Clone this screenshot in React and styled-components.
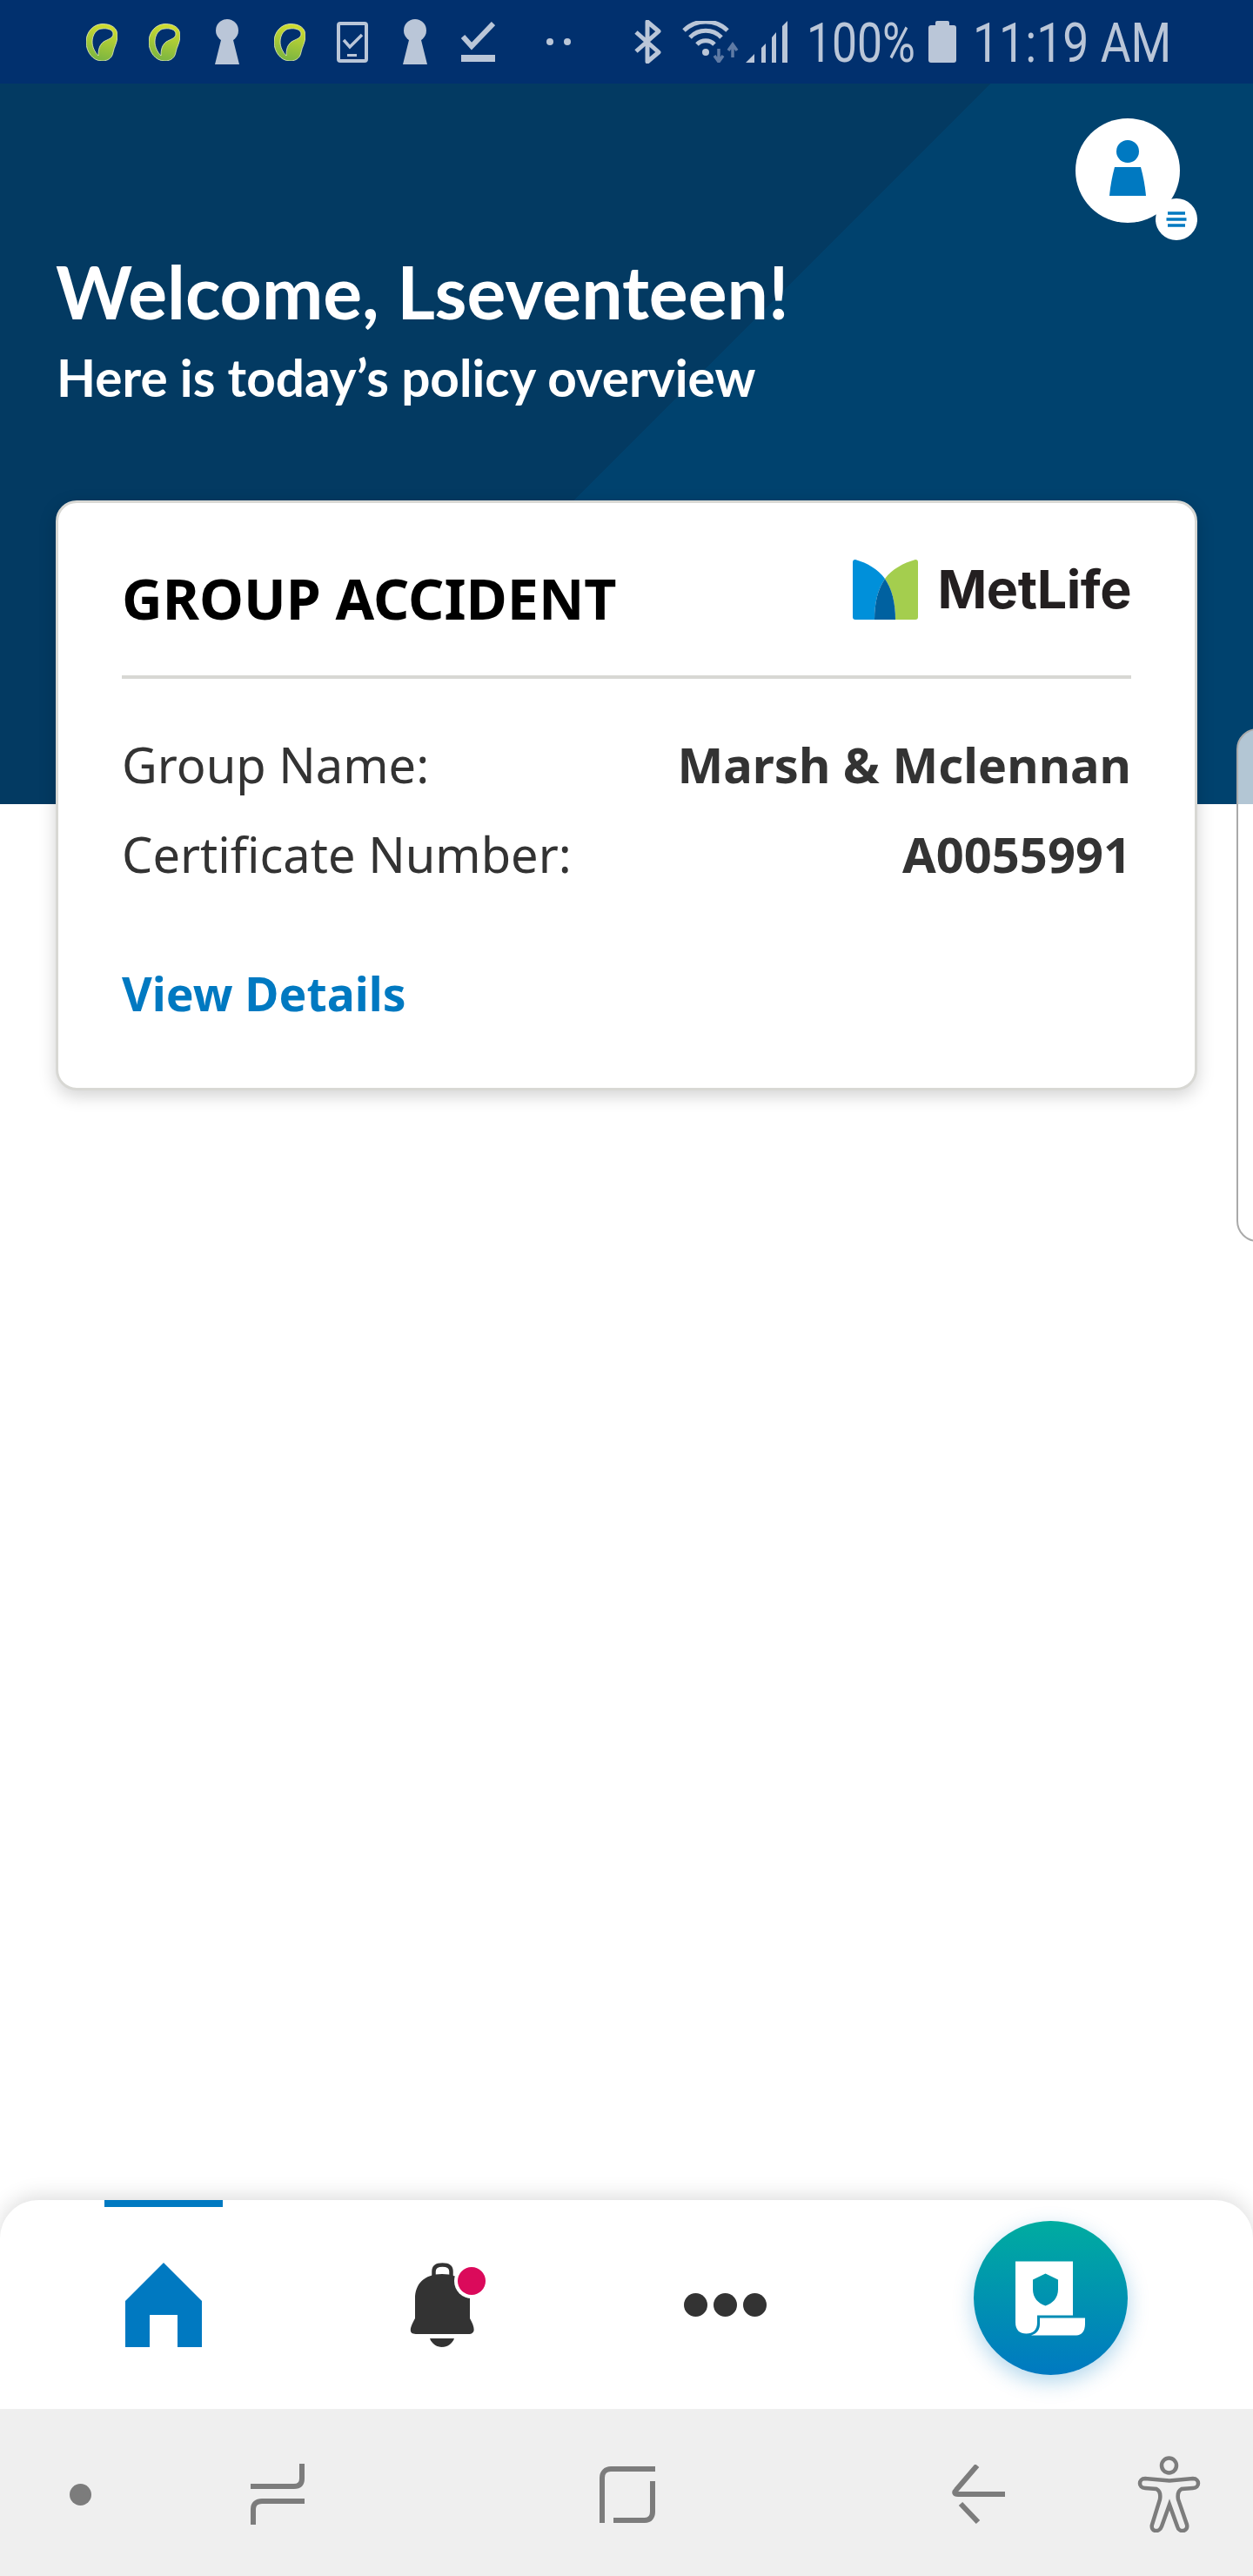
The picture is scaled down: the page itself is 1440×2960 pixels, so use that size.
import React from 'react';
import styled, { createGlobalStyle } from 'styled-components';

const GlobalStyle = createGlobalStyle`
	html, body {
		margin: 0;
		padding: 0;
		background: #fff;
	}
	* {
		box-sizing: border-box;
	}
`;

const STATUS = '#bac6d8';
const BRAND = '#0079c1';
const SOFTKEY = '#7c7c7c';

const App = () => (
	<Page>
		<GlobalStyle />
		<StatusBar>
			<StatusLeft>
				<Leaf $ml={0} />
				<Leaf $ml={36} />
				<Keyhole $ml={40} />
				<Leaf $ml={40} />
				<StatusIcon $ml={36} width='36' height='47' viewBox='387 24 36 47'>
					<rect x='389' y='26' width='32' height='43' rx='2' fill='none' stroke={STATUS} strokeWidth='4' />
					<polyline points='395,45 402,53 416,39' fill='none' stroke={STATUS} strokeWidth='3.5' />
					<rect x='399' y='61' width='11' height='3' fill={STATUS} />
				</StatusIcon>
				<Keyhole $ml={40} />
				<StatusIcon $ml={39} width='39' height='46' viewBox='530 25 39 46'>
					<polyline points='532,42 542,53 567,27' fill='none' stroke={STATUS} strokeWidth='6' />
					<rect x='530' y='63' width='39' height='8' fill={STATUS} />
				</StatusIcon>
				<StatusIcon $ml={59} width='28' height='8' viewBox='628 44 28 8'>
					<circle cx='632' cy='48' r='4' fill={STATUS} />
					<circle cx='652' cy='48' r='4' fill={STATUS} />
				</StatusIcon>
			</StatusLeft>
			<StatusRight>
				<StatusIcon $ml={0} width='31' height='50' viewBox='729 23 31 50'>
					<path d='M731 37 L757 60 L744 71 V25 L757 36 L731 59' fill='none' stroke={STATUS} strokeWidth='5' strokeLinejoin='round' />
				</StatusIcon>
				<StatusIcon $ml={24} width='65' height='48' viewBox='784 24 65 48'>
					<path d='M786 35 A36 36 0 0 1 836 35 M793 43 A25 25 0 0 1 829 43 M801 51 A14 14 0 0 1 821 51' fill='none' stroke={STATUS} strokeWidth='5' />
					<circle cx='811' cy='60' r='4' fill={STATUS} />
					<path d='M826 56 V68 M821 64 L826 71 L831 64 M842 66 V54 M837 58 L842 51 L847 58' fill='none' stroke='#5f7ba5' strokeWidth='3.5' />
				</StatusIcon>
				<StatusIcon $ml={8} width='48' height='48' viewBox='857 24 48 48'>
					<path d='M857 72 L867 62 V72 Z M875 72 V55 L880 50 V72 Z M887 72 V43 L892 37 V72 Z M899 72 V30 L905 24 V72 Z' fill={STATUS} />
				</StatusIcon>
				<StatusText $ml={22} $w={121} $sx={0.82}>100%</StatusText>
				<StatusIcon $ml={19} width='32' height='48' viewBox='1067 24 32 48'>
					<rect x='1075' y='24' width='16' height='8' rx='2' fill={STATUS} />
					<rect x='1067' y='29' width='32' height='43' rx='3' fill={STATUS} />
				</StatusIcon>
				<StatusText $ml={19} $w={222} $sx={0.85}>11:19 AM</StatusText>
			</StatusRight>
		</StatusBar>

		<Main>
			<Hero>
				<AvatarRow>
					<Avatar>
						<svg width='120' height='120' viewBox='1236 136 120 120'>
							<circle cx='1296' cy='174' r='13' fill={BRAND} />
							<path d='M1281 192 H1311 C1314 203 1316 214 1317 225 H1275 C1276 214 1278 203 1281 192 Z' fill={BRAND} />
						</svg>
						<MenuBadge>
							<svg width='24' height='18' viewBox='0 0 24 18'>
								<path d='M2 2 H22 M0.5 9 H23.5 M2 16 H22' fill='none' stroke={BRAND} strokeWidth='3.6' />
							</svg>
						</MenuBadge>
					</Avatar>
				</AvatarRow>
				<Welcome>Welcome, Lseventeen!</Welcome>
				<Subtitle>Here is today’s policy overview</Subtitle>
				<Carousel>
					<PolicyCard>
						<CardHead>
							<CardTitle>GROUP ACCIDENT</CardTitle>
							<Brand>
								<svg width='75' height='69' viewBox='980 643 75 69'>
									<path d='M983 643 C997 647 1009 654 1017 665 C1009 677 1005 692 1005 712 H983 Q980 712 980 709 V646 Q980 643 983 643 Z' fill='#0090da' />
									<path d='M1052 643 Q1055 643 1055 646 V709 Q1055 712 1052 712 H1029 C1029 692 1025 677 1017 665 C1025 654 1038 647 1052 643 Z' fill='#a4ce4e' />
									<path d='M1017 665 C1025 677 1029 692 1029 712 H1005 C1005 692 1009 677 1017 665 Z' fill='#0061a0' />
								</svg>
								<BrandName>MetLife</BrandName>
							</Brand>
						</CardHead>
						<InfoRow>
							<InfoLabel>Group Name:</InfoLabel>
							<InfoValue>Marsh &amp; Mclennan</InfoValue>
						</InfoRow>
						<InfoRow>
							<InfoLabel>Certificate Number:</InfoLabel>
							<InfoValue>A0055991</InfoValue>
						</InfoRow>
						<DetailsLink>View Details</DetailsLink>
					</PolicyCard>
					<NextCard />
				</Carousel>
			</Hero>
		</Main>

		<BottomNav>
			<NavItem $active>
				<svg width='136' height='97' viewBox='120 2599 136 97'>
					<path fillRule='evenodd' d='M188 2599 L232 2643 V2696 H204 V2659 H172 V2696 H144 V2643 Z' fill={BRAND} />
				</svg>
			</NavItem>
			<NavItem $ml={184}>
				<svg width='136' height='97' viewBox='440 2599 136 97'>
					<path d='M498.5 2614 V2609 C498.5 2604 502 2601.5 508.5 2601.5 C515 2601.5 518.5 2604 518.5 2609 V2614' fill='none' stroke='#333' strokeWidth='4.5' />
					<path d='M477 2663 V2640 C477 2624 487 2612 508 2612 C529 2612 540 2624 540 2640 V2663 C545 2672 548 2681 538 2681 H478 C468 2681 472 2672 477 2663 Z' fill='#333' />
					<path d='M494 2686 H522 C520 2692 514 2696 508 2696 C502 2696 496 2692 494 2686 Z' fill='#333' />
					<circle cx='542' cy='2620' r='20' fill='#fff' />
					<circle cx='542' cy='2620' r='16' fill='#db0a5b' />
				</svg>
			</NavItem>
			<NavItem $ml={189}>
				<MoreDots>
					<MoreDot />
					<MoreDot />
					<MoreDot />
				</MoreDots>
			</NavItem>
			<PolicyFab>
				<svg width='95' height='95' viewBox='1160 2592.5 95 95'>
					<path fillRule='evenodd' fill='#fff' d='M1167 2598 H1233 V2660 H1192 V2668 C1192 2677 1187 2681 1179.5 2681 C1172 2681 1167 2677 1167 2668 Z M1201.5 2612 L1187 2619 V2630 C1187 2640 1193 2646 1201.5 2649 C1210 2646 1216 2640 1216 2630 V2619 Z' />
					<path fill='#fff' d='M1195 2663 H1247 V2670 C1247 2678 1243 2683 1237 2683 H1185 C1192 2681 1195 2676 1195 2670 Z' />
				</svg>
			</PolicyFab>
		</BottomNav>

		<SoftKeys>
			<SoftDot />
			<SoftKey $ml={183} width='62' height='70' viewBox='288 2831 62 70'>
				<path d='M288 2857 H338 C344 2857 347 2854 347 2848 V2831 M350 2874 H301 C295 2874 291 2877 291 2883 V2901' />
			</SoftKey>
			<SoftKey $ml={339} width='64' height='65' viewBox='689 2833 64 65'>
				<path d='M753 2836 H702 C696 2836 692 2840 692 2846 V2898 M750 2850 V2885 C750 2891 747 2895 741 2895 H705' />
			</SoftKey>
			<SoftKey $ml={341} width='61' height='68' viewBox='1094 2832 61 68'>
				<path d='M1123 2833 L1099 2861 C1096 2864 1097 2866 1101 2866 H1155 M1104 2877 L1124 2898' />
			</SoftKey>
			<SoftKey $ml={152} width='73' height='88' viewBox='1307 2822 73 88' $thin>
				<circle cx='1343.5' cy='2833' r='8.5' />
				<path d='M1316 2848 L1344 2850.5 L1371 2848 C1379 2848 1379 2859 1371 2859 L1358 2860 C1354 2862 1353 2866 1354 2872 L1364 2901 C1366 2909 1355 2911 1353 2903 L1344 2878 L1335 2903 C1332 2911 1322 2909 1324 2901 L1333 2872 C1334 2866 1333 2862 1329 2860 L1316 2859 C1308 2859 1308 2848 1316 2848 Z' />
			</SoftKey>
		</SoftKeys>
	</Page>
);

const Leaf = ({ $ml }) => (
	<StatusIcon $ml={$ml} width='36' height='43' viewBox='0 0 36 43'>
		<defs>
			<linearGradient id='leafFill' x1='0.6' y1='0' x2='0.4' y2='1'>
				<stop offset='0' stopColor='#d2dd2e' />
				<stop offset='1' stopColor='#79b441' />
			</linearGradient>
		</defs>
		<path
			fillRule='evenodd'
			fill='url(#leafFill)'
			stroke='#e8efc0'
			strokeWidth='0.8'
			d='M19 0.5 C29 0.5 36 5 36 14 C36 22 32 27 31 33 C30 39 26 43 18 43 C8 43 0 33 0 21 C0 9 9 0.5 19 0.5 Z M18 6 C12 6 7 13 7 21 C7 27 10 33 14 37 C14 30 15 25 20 21 C25 18 31 17 31 12 C31 7 24 5 18 6 Z'
		/>
	</StatusIcon>
);

const Keyhole = ({ $ml }) => (
	<StatusIcon $ml={$ml} width='28' height='52' viewBox='0 0 28 52'>
		<circle cx='14' cy='13' r='13' fill={STATUS} />
		<path d='M8 20 H20 L28 52 H0 Z' fill={STATUS} />
	</StatusIcon>
);

const Page = styled.div`
	display: flex;
	flex-direction: column;
	width: 1440px;
	height: 2960px;
	overflow: hidden;
	background: #fff;
	font-family: 'Noto Sans', sans-serif;
`;

const StatusBar = styled.div`
	display: flex;
	align-items: center;
	justify-content: space-between;
	flex: none;
	height: 96px;
	padding: 0 100px 0 99px;
	background: #01306e;
`;

const StatusLeft = styled.div`
	display: flex;
	align-items: center;
`;

const StatusRight = styled.div`
	display: flex;
	align-items: center;
`;

const StatusIcon = styled.svg`
	display: block;
	flex: none;
	margin-left: ${(p) => p.$ml}px;
`;

const StatusText = styled.span`
	display: block;
	flex: none;
	width: ${(p) => p.$w}px;
	margin-left: ${(p) => p.$ml}px;
	padding-top: 3px;
	font-family: Roboto, sans-serif;
	font-size: 63px;
	font-weight: 400;
	line-height: 93px;
	color: ${STATUS};
	white-space: nowrap;
	transform: scaleX(${(p) => p.$sx});
	transform-origin: left center;
`;

const Main = styled.main`
	flex: 1;
	min-height: 0;
`;

const Hero = styled.section`
	height: 828px;
	padding-top: 40px;
	background: linear-gradient(135deg, #033a62 50.2%, #00426e 50.2%);
`;

const AvatarRow = styled.div`
	display: flex;
	justify-content: flex-end;
	padding-right: 84px;
`;

const Avatar = styled.div`
	position: relative;
	width: 120px;
	height: 120px;
	border-radius: 50%;
	background: #fff;
`;

const MenuBadge = styled.div`
	position: absolute;
	right: -20px;
	bottom: -20px;
	display: flex;
	align-items: center;
	justify-content: center;
	width: 48px;
	height: 48px;
	border-radius: 50%;
	background: #fff;
`;

const Welcome = styled.h1`
	margin: 31px 0 0 64px;
	font-family: Lato, sans-serif;
	font-size: 84px;
	font-weight: 700;
	line-height: 96px;
	color: #fff;
`;

const Subtitle = styled.p`
	margin: 14px 0 0 65px;
	font-family: Lato, sans-serif;
	font-size: 58.5px;
	font-weight: 700;
	line-height: 72px;
	color: #fff;
`;

const Carousel = styled.div`
	display: flex;
	gap: 45px;
	align-items: flex-start;
	margin-top: 106px;
	padding-left: 64px;
`;

const PolicyCard = styled.article`
	flex: none;
	width: 1312px;
	height: 678px;
	padding: 0 73px;
	border: 3px solid #d8d8d4;
	border-radius: 24px;
	background: #fff;
	box-shadow: 0 6px 20px rgba(0, 0, 0, 0.18);
`;

const NextCard = styled.div`
	flex: none;
	width: 300px;
	height: 590px;
	margin-top: 262px;
	border: 2px solid #aaa;
	border-radius: 24px;
	background: rgba(255, 255, 255, 0.7);
`;

const CardHead = styled.header`
	display: flex;
	justify-content: space-between;
	align-items: flex-start;
	height: 202px;
	padding-top: 65px;
	border-bottom: 4px solid #d8d8d4;
`;

const CardTitle = styled.h2`
	margin: -1px 0 0;
	font-size: 64.5px;
	font-weight: 700;
	line-height: 90px;
	color: #000;
`;

const Brand = styled.div`
	display: flex;
	align-items: flex-start;
	gap: 23px;
`;

const BrandName = styled.span`
	font-family: Inter, sans-serif;
	font-size: 61px;
	font-weight: 700;
	line-height: 69px;
	letter-spacing: -0.5px;
	color: #231f20;
`;

const InfoRow = styled.div`
	display: flex;
	justify-content: space-between;
	align-items: center;
	height: 103px;
	font-size: 56px;
	color: #333;

	&:first-of-type {
		margin-top: 46px;
	}
`;

const InfoLabel = styled.span`
	font-weight: 400;
`;

const InfoValue = styled.span`
	font-weight: 700;
`;

const DetailsLink = styled.a`
	display: block;
	margin-top: 59px;
	font-size: 53.5px;
	font-weight: 700;
	line-height: 102px;
	color: ${BRAND};
`;

const BottomNav = styled.nav`
	position: relative;
	display: flex;
	align-items: flex-start;
	flex: none;
	height: 240px;
	padding-left: 120px;
	border-radius: 44px 44px 0 0;
	background: #fff;
	box-shadow: 0 -4px 24px rgba(0, 0, 0, 0.14);
`;

const NavItem = styled.div`
	display: flex;
	align-items: center;
	justify-content: center;
	flex: none;
	width: 136px;
	height: 240px;
	margin-left: ${(p) => p.$ml || 0}px;
	border-top: 8px solid ${(p) => (p.$active ? BRAND : 'transparent')};
	padding-bottom: 8px;
`;

const MoreDots = styled.div`
	display: flex;
	gap: 7px;
`;

const MoreDot = styled.span`
	width: 27px;
	height: 27px;
	border-radius: 50%;
	background: #333;
`;

const PolicyFab = styled.button`
	display: flex;
	align-items: center;
	justify-content: center;
	flex: none;
	width: 177px;
	height: 177px;
	margin: 24px 0 0 218px;
	padding: 0;
	border: none;
	border-radius: 50%;
	background: linear-gradient(180deg, #00aca0 0%, ${BRAND} 100%);
	box-shadow: 0 8px 24px rgba(0, 121, 193, 0.3);
`;

const SoftKeys = styled.div`
	position: relative;
	display: flex;
	align-items: center;
	flex: none;
	height: 192px;
	padding: 4px 0 0 80px;
	background: #efefef;
`;

const SoftDot = styled.span`
	flex: none;
	width: 25px;
	height: 25px;
	border-radius: 50%;
	background: ${SOFTKEY};
`;

const SoftKey = styled.svg`
	display: block;
	flex: none;
	margin-left: ${(p) => p.$ml}px;
	fill: none;
	stroke: ${SOFTKEY};
	stroke-width: ${(p) => (p.$thin ? 4.5 : 6)}px;
`;

export default App;
